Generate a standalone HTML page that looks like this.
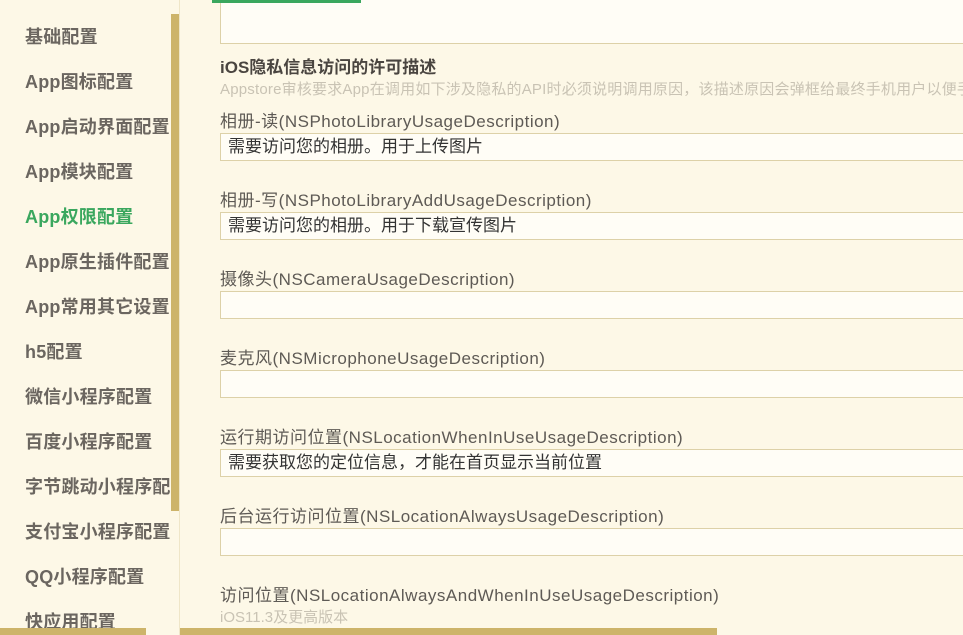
<!DOCTYPE html>
<html><head><meta charset="utf-8"><style>
body{margin:0;width:963px;height:635px;overflow:hidden;background:#fdf8e7;font-family:"Liberation Sans","Noto Sans CJK SC",sans-serif;position:relative}
.side{position:absolute;left:0;top:0;width:179px;height:635px;background:#fdf8e7;border-right:1px solid #efe6c8;overflow:hidden}
.si{position:absolute;left:25px;font-size:18px;letter-spacing:0.2px;font-weight:bold;color:#6b6660;white-space:nowrap;line-height:20px}
.a{color:#3aa75e}
.vs{position:absolute;left:171px;top:14px;width:8px;height:497px;background:#cdb46a}
.hs1{position:absolute;left:0;top:628px;width:146px;height:7px;background:#cdb46a}
.hs2{position:absolute;left:180px;top:628px;width:537px;height:7px;background:#cdb46a}
.main{position:absolute;left:0;top:0;width:963px;height:635px;overflow:hidden}
.lb{position:absolute;left:220px;font-size:17px;letter-spacing:0.5px;color:#5e5a55;white-space:nowrap;line-height:20px}
.in{position:absolute;left:220px;width:760px;background:#fffdf6;border:1px solid #ddd1a8;font-size:17px;color:#333;line-height:26px;padding-left:7px;box-sizing:border-box;height:28px;white-space:nowrap}
</style></head><body>
<div class="main">
<div class="in" style="top:-2px;height:46px"></div>
<div style="position:absolute;left:212px;top:0;width:149px;height:3px;background:#3aa75e"></div>
<div class="lb" style="top:58px;font-weight:bold;font-size:17px;letter-spacing:0;color:#4a4540">iOS隐私信息访问的许可描述</div>
<div class="lb" style="top:80px;font-size:15px;letter-spacing:0.2px;color:#c9c3b4">Appstore审核要求App在调用如下涉及隐私的API时必须说明调用原因，该描述原因会弹框给最终手机用户以便手机用户确认</div>
<div class="lb" style="top:112px">相册-读(NSPhotoLibraryUsageDescription)</div>
<div class="in" style="top:133px">需要访问您的相册。用于上传图片</div>
<div class="lb" style="top:191px">相册-写(NSPhotoLibraryAddUsageDescription)</div>
<div class="in" style="top:212px">需要访问您的相册。用于下载宣传图片</div>
<div class="lb" style="top:270px">摄像头(NSCameraUsageDescription)</div>
<div class="in" style="top:291px"></div>
<div class="lb" style="top:349px">麦克风(NSMicrophoneUsageDescription)</div>
<div class="in" style="top:370px"></div>
<div class="lb" style="top:428px">运行期访问位置(NSLocationWhenInUseUsageDescription)</div>
<div class="in" style="top:449px">需要获取您的定位信息，才能在首页显示当前位置</div>
<div class="lb" style="top:507px">后台运行访问位置(NSLocationAlwaysUsageDescription)</div>
<div class="in" style="top:528px"></div>
<div class="lb" style="top:586px">访问位置(NSLocationAlwaysAndWhenInUseUsageDescription)</div>
<div class="lb" style="top:608px;font-size:15px;letter-spacing:0;color:#c9c3b4">iOS11.3及更高版本</div>
</div>
<div class="side">
<div class="si" style="top:27px">基础配置</div>
<div class="si" style="top:72px">App图标配置</div>
<div class="si" style="top:117px">App启动界面配置</div>
<div class="si" style="top:162px">App模块配置</div>
<div class="si a" style="top:207px">App权限配置</div>
<div class="si" style="top:252px">App原生插件配置</div>
<div class="si" style="top:297px">App常用其它设置</div>
<div class="si" style="top:342px">h5配置</div>
<div class="si" style="top:387px">微信小程序配置</div>
<div class="si" style="top:432px">百度小程序配置</div>
<div class="si" style="top:477px">字节跳动小程序配置</div>
<div class="si" style="top:522px">支付宝小程序配置</div>
<div class="si" style="top:567px">QQ小程序配置</div>
<div class="si" style="top:612px">快应用配置</div>
</div>
<div class="vs"></div>
<div class="hs1"></div><div class="hs2"></div>
</body></html>
